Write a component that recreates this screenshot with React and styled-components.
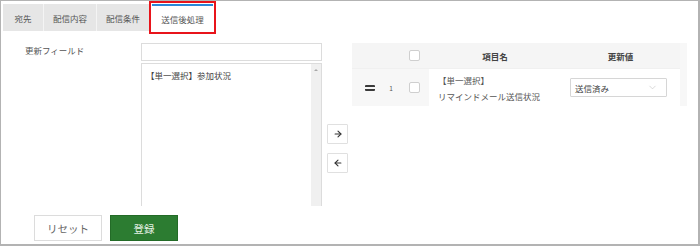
import React from "react";
import styled, { createGlobalStyle } from "styled-components";
import { ArrowRight, ArrowLeft, ChevronDown } from "lucide-react";

const GlobalStyle = createGlobalStyle`
  body {
    margin: 0;
    font-family: "Noto Sans CJK JP", "Noto Sans", sans-serif;
    color: #555;
    background: #fff;
  }
`;

const tabs = ["宛先", "配信内容", "配信条件", "送信後処理"];

function App() {
  return (
    <>
      <GlobalStyle />
      <Frame>
        <TabBar>
          {tabs.map((t, i) => (
            <Tab key={t} $active={i === 3}>
              {t}
            </Tab>
          ))}
        </TabBar>

        <Body>
          <Label>更新フィールド</Label>

          <ListColumn>
            <SearchInput />
            <ListBox>
              <ListItem>【単一選択】参加状況</ListItem>
              <ScrollBar>
                <ScrollUp />
              </ScrollBar>
            </ListBox>
          </ListColumn>

          <Arrows>
            <ArrowButton>
              <ArrowRight size={10} strokeWidth={2.6} />
            </ArrowButton>
            <ArrowButton>
              <ArrowLeft size={10} strokeWidth={2.6} />
            </ArrowButton>
          </Arrows>

          <Table>
            <HeadRow>
              <Cell $w={30} />
              <Cell $w={18} />
              <Cell $w={29}>
                <Check />
              </Cell>
              <HeadCell $w={132}>項目名</HeadCell>
              <HeadCell $w={119}>更新値</HeadCell>
            </HeadRow>
            <BodyRow>
              <Cell $w={30}>
                <Handle />
              </Cell>
              <Cell $w={18}>
                <RowNo>1</RowNo>
              </Cell>
              <Cell $w={29}>
                <Check />
              </Cell>
              <NameCell $w={132}>
                <div>【単一選択】</div>
                <div>リマインドメール送信状況</div>
              </NameCell>
              <ValueCell $w={119}>
                <Select>
                  <span>送信済み</span>
                  <ChevronDown size={11} strokeWidth={1.2} color="#bbb" />
                </Select>
              </ValueCell>
            </BodyRow>
          </Table>
        </Body>

        <Footer>
          <Button>リセット</Button>
          <Button $primary>登録</Button>
        </Footer>
      </Frame>
    </>
  );
}

const Frame = styled.div`
  width: 700px;
  height: 246px;
  box-sizing: border-box;
  border-style: solid;
  border-color: #b3b3b3;
  border-width: 1px 2px 2px 1px;
  padding-top: 3px;
  overflow: hidden;
`;

const TabBar = styled.div`
  display: flex;
  height: 27px;
  padding-left: 2px;
`;

const Tab = styled.div`
  min-width: 41px;
  padding: 0 9px;
  box-sizing: border-box;
  display: flex;
  align-items: center;
  justify-content: center;
  font-size: 8.5px;
  color: #555;
  background: ${(p) => (p.$active ? "#fff" : "#e6e6e6")};
  border-right: 1px solid #f4f4f4;
  ${(p) =>
    p.$active &&
    `
    margin-left: 2px;
    width: 61px;
    border-right: none;
    border-top: 2px solid #2a88d8;
    outline: 2px solid #e8141b;
    outline-offset: 1px;
  `}
`;

const Body = styled.div`
  display: flex;
  align-items: flex-start;
  height: 163px;
  margin-top: 12px;
  padding-left: 24px;
`;

const Label = styled.div`
  width: 116px;
  font-size: 8.5px;
  line-height: 12px;
  padding-top: 1px;
  color: #555;
`;

const ListColumn = styled.div`
  width: 181px;
  display: flex;
  flex-direction: column;
  gap: 2px;
`;

const SearchInput = styled.div`
  height: 18px;
  border: 1px solid #dcdcdc;
  box-sizing: border-box;
  background: #fff;
`;

const ListBox = styled.div`
  position: relative;
  height: 143px;
  border: 1px solid #dcdcdc;
  border-bottom: none;
  box-sizing: border-box;
  padding: 5px 4px;
`;

const ListItem = styled.div`
  font-size: 8.5px;
  line-height: 12px;
  color: #444;
`;

const ScrollBar = styled.div`
  position: absolute;
  top: 0;
  right: 0;
  bottom: 0;
  width: 10px;
  background: #f0f0f0;
`;

const ScrollUp = styled.div`
  margin: 5px auto 0;
  width: 0;
  height: 0;
  border-left: 2px solid transparent;
  border-right: 2px solid transparent;
  border-bottom: 2px solid #a8a8a8;
`;

const Arrows = styled.div`
  margin-left: 5px;
  padding-top: 81px;
  display: flex;
  flex-direction: column;
  gap: 9px;
`;

const ArrowButton = styled.div`
  width: 21px;
  height: 20px;
  box-sizing: border-box;
  border: 1px solid #e0e0e0;
  border-radius: 1px;
  background: #fff;
  display: flex;
  align-items: center;
  justify-content: center;
  color: #333;
`;

const Table = styled.div`
  margin-left: 4px;
  width: 335px;
  padding-right: 7px;
  box-sizing: border-box;
  background: #f7f7f7;
`;

const HeadRow = styled.div`
  display: flex;
  height: 25px;
  border-bottom: 1px solid #f0f0f0;
  background: #f5f5f5;
`;

const BodyRow = styled.div`
  display: flex;
  height: 37px;
`;

const Cell = styled.div`
  width: ${(p) => p.$w}px;
  flex-shrink: 0;
  display: flex;
  align-items: center;
  justify-content: center;
`;

const HeadCell = styled(Cell)`
  font-size: 8.5px;
  font-weight: 700;
  color: #444;
`;

const NameCell = styled(Cell)`
  background: #fff;
  flex-direction: column;
  align-items: flex-start;
  padding-left: 9px;
  box-sizing: border-box;
  font-size: 8.5px;
  line-height: 16px;
  color: #555;
`;

const ValueCell = styled(Cell)`
  background: #fff;
  justify-content: flex-start;
  padding-left: 9px;
  box-sizing: border-box;
`;

const Check = styled.div`
  width: 11px;
  height: 11px;
  box-sizing: border-box;
  border: 1px solid #cfcfcf;
  border-radius: 2px;
  background: #fff;
`;

const Handle = styled.div`
  margin-left: 6px;
  width: 10px;
  height: 2px;
  border-top: 2px solid #3a3a3a;
  border-bottom: 2px solid #3a3a3a;
  border-radius: 1px;
`;

const RowNo = styled.span`
  font-size: 6.5px;
  color: #555;
`;

const Select = styled.div`
  width: 97px;
  height: 19px;
  box-sizing: border-box;
  border: 1px solid #d6d6d6;
  border-radius: 1px;
  background: #fff;
  display: flex;
  align-items: center;
  justify-content: space-between;
  padding: 0 8px 0 4px;
  font-size: 8.5px;
  color: #444;
`;

const Footer = styled.div`
  display: flex;
  gap: 8px;
  margin-top: 9px;
  padding-left: 33px;
`;

const Button = styled.div`
  width: 68px;
  height: 26px;
  box-sizing: border-box;
  display: flex;
  align-items: center;
  justify-content: center;
  font-size: 10.5px;
  border: 1px solid ${(p) => (p.$primary ? "#236b27" : "#dcdcdc")};
  background: ${(p) => (p.$primary ? "#2c7c31" : "#fff")};
  color: ${(p) => (p.$primary ? "#e6f2e6" : "#666")};
`;

export default App;
